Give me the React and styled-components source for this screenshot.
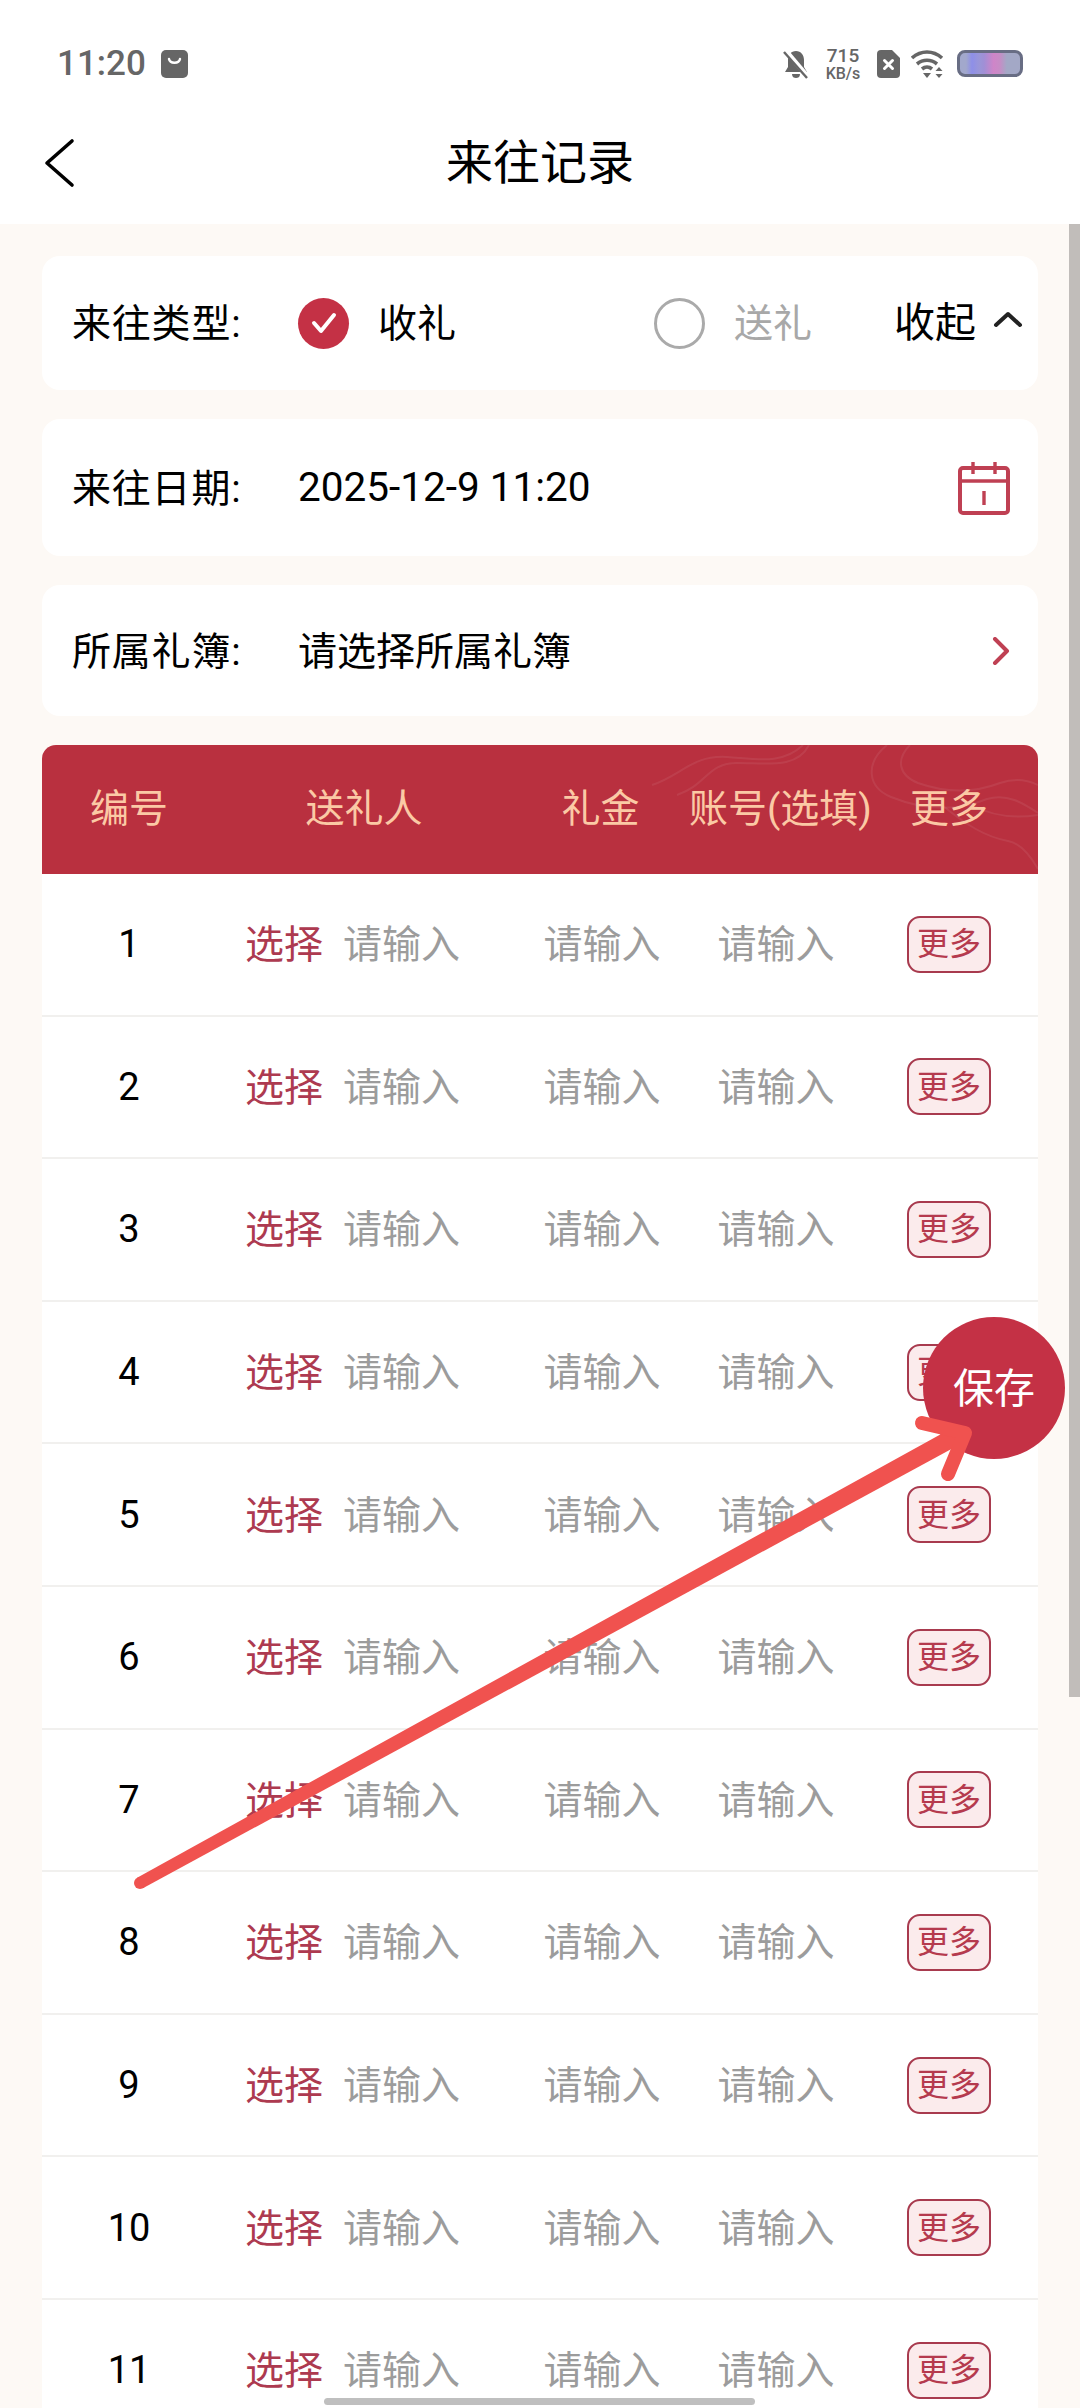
import React from 'react'
import styled, { createGlobalStyle } from 'styled-components'

const GlobalStyle = createGlobalStyle`
  html, body {
    margin: 0;
    padding: 0;
    background: #fdf9f5;
  }
  * {
    box-sizing: border-box;
  }
`

const Page = styled.div`
  position: relative;
  width: 1080px;
  height: 2408px;
  overflow: hidden;
  background: #fdf9f5;
  color: #000;
  font-family: Roboto, 'Noto Sans CJK SC', sans-serif;
  font-size: 39px;
`

const Top = styled.header`
  height: 224px;
  background: #fff;
  display: flex;
  flex-direction: column;
`

const StatusBar = styled.div`
  height: 127px;
  padding: 0 57px 0 57px;
  display: flex;
  align-items: center;
  color: #666;
`

const Clock = styled.span`
  font-size: 35px;
  font-weight: 500;
  margin-right: 15px;
`

const StatusRight = styled.div`
  margin-left: auto;
  display: flex;
  align-items: center;
`

const Speed = styled.div`
  width: 40px;
  margin: 0 14px 0 13px;
  display: flex;
  flex-direction: column;
  align-items: center;
  font-weight: 500;
  font-size: 19px;
  line-height: 20px;
  span + span {
    font-size: 16px;
    line-height: 16px;
  }
`

const Battery = styled.div`
  width: 66px;
  height: 27px;
  margin-left: 12px;
  border: 3px solid #686d84;
  border-radius: 8px;
  background: linear-gradient(
    90deg,
    #a2a8cc 0 10%,
    #8e8fe8 20%,
    #9a96d8 32%,
    #a08fd6 40%,
    #cf85c8 56%,
    #c78cc6 66%,
    #a3a8c6 78%,
    #a3a8c6 100%
  );
`

const NavBar = styled.nav`
  position: relative;
  height: 97px;
  display: flex;
  align-items: flex-start;
  justify-content: center;
  font-size: 47px;
  line-height: 72px;
`

const BackIcon = styled.svg`
  position: absolute;
  left: 44px;
  top: 11px;
`

const Content = styled.main`
  padding: 32px 42px 0 42px;
  display: flex;
  flex-direction: column;
`

const Card = styled.section`
  height: ${(p) => p.$h}px;
  margin-bottom: 29px;
  padding: 0 28px 0 30px;
  display: flex;
  align-items: center;
  background: #fff;
  border-radius: 18px;
`

const Label = styled.span`
  width: 226px;
  flex-shrink: 0;
  padding-bottom: 6px;
  letter-spacing: 0.8px;
`

const Radio = styled.div`
  width: 51px;
  height: 51px;
  flex-shrink: 0;
  border-radius: 50%;
  display: flex;
  align-items: center;
  justify-content: center;
  background: ${(p) => (p.$on ? '#c43145' : '#fff')};
  border: ${(p) => (p.$on ? 'none' : '3px solid #aaa')};
`

const RadioText = styled.span`
  flex-shrink: 0;
  padding-bottom: 6px;
  margin-left: 29px;
  width: ${(p) => (p.$on ? '276px' : '160px')};
  color: ${(p) => (p.$on ? '#000' : '#a8a8a8')};
`

const Collapse = styled.div`
  display: flex;
  align-items: center;
  flex-shrink: 0;
  margin-top: -8px;
  font-size: 41px;
  gap: 17px;
  white-space: nowrap;
`

const Value = styled.span`
  flex: 1;
  padding-bottom: ${(p) => (p.$cjk ? '6px' : '2px')};
  font-size: ${(p) => (p.$cjk ? '39px' : '40.5px')};
`

const TableHead = styled.div`
  position: relative;
  height: 129px;
  overflow: hidden;
  display: grid;
  grid-template-columns: 174px 296px 177px 178px 164px;
  align-items: center;
  background: #b9303f;
  border-radius: 14px 14px 0 0;
  color: #fbc9a5;
  text-align: center;
`

const HeadCell = styled.span`
  position: relative;
  margin-top: -10px;
  white-space: nowrap;
`

const Clouds = styled.svg`
  position: absolute;
  left: 0;
  top: 0;
`

const Row = styled.div`
  height: 142.6px;
  display: grid;
  grid-template-columns: 174px 296px 180px 168px 178px;
  align-items: center;
  background: #fff;
  border-bottom: 2px solid #f1f0ee;
  text-align: center;
  font-size: 38px;
`

const PersonCell = styled.div`
  display: flex;
  justify-content: flex-start;
  padding-left: 29px;
  gap: 20px;
`

const Pick = styled.span`
  color: #ad3a50;
  font-size: 39px;
  padding-bottom: 6px;
  white-space: nowrap;
`

const Placeholder = styled.span`
  color: #9c9c9c;
  font-size: 39px;
  padding-bottom: 6px;
  white-space: nowrap;
`

const MoreButton = styled.button`
  justify-self: center;
  width: 84px;
  height: 57px;
  padding: 0;
  border: 2px solid #a83a4e;
  border-radius: 13px;
  background: #fbebec;
  color: #b53a4e;
  font-family: inherit;
  font-size: 32px;
  line-height: 50px;
  white-space: nowrap;
`

const SaveButton = styled.div`
  position: absolute;
  left: 923px;
  top: 1317px;
  width: 142px;
  height: 142px;
  padding-bottom: 6px;
  border-radius: 50%;
  display: flex;
  align-items: center;
  justify-content: center;
  background: #c43145;
  color: #fff;
  font-size: 41px;
`

const ArrowOverlay = styled.svg`
  position: absolute;
  left: 0;
  top: 0;
`

const ScrollThumb = styled.div`
  position: absolute;
  right: 0;
  top: 224px;
  width: 11px;
  height: 1473px;
  background: #c1bdba;
`

const HomeBar = styled.div`
  position: absolute;
  left: 324px;
  top: 2398px;
  width: 431px;
  height: 7px;
  border-radius: 4px;
  background: #bfbfbf;
`

const rows = [1, 2, 3, 4, 5, 6, 7, 8, 9, 10, 11]

const App = () => {
  return (
    <Page>
      <GlobalStyle />
      <Top>
        <StatusBar>
          <Clock>11:20</Clock>
          <svg width="27" height="28" viewBox="0 0 27 28">
            <rect width="27" height="28" rx="5" fill="#666" />
            <path d="M8 9c1 5 10 5 11 0" fill="none" stroke="#fff" strokeWidth="2.4" strokeLinecap="round" />
          </svg>
          <StatusRight>
            <svg width="28" height="30" viewBox="0 0 28 30">
              <path d="M14 2c5 0 8 4 8 9v7l3 5H3l3-5v-7c0-5 3-9 8-9z" fill="#666" />
              <path d="M10 25h8c0 3-2 4-4 4s-4-1-4-4z" fill="#666" />
              <path d="M3 1l23 27" stroke="#fff" strokeWidth="5" />
              <path d="M2 3l23 26" stroke="#666" strokeWidth="2.4" />
            </svg>
            <Speed>
              <span>715</span>
              <span>KB/s</span>
            </Speed>
            <svg width="23" height="28" viewBox="0 0 23 28">
              <path d="M4 0h11l8 8v16a4 4 0 0 1-4 4H4a4 4 0 0 1-4-4V4a4 4 0 0 1 4-4z" fill="#666" />
              <path d="M7.500 10.500l8 8M15.500 10.500l-8 8" stroke="#fff" strokeWidth="3" strokeLinecap="round" />
            </svg>
            <svg width="34" height="28" viewBox="0 0 34 28" style={{ marginLeft: 11 }}>
              <path d="M1 8c9-8 21-8 30 0" fill="none" stroke="#666" strokeWidth="3.600" />
              <path d="M6 14c6-5 14-5 20 0" fill="none" stroke="#666" strokeWidth="3.600" />
              <path d="M11 19c3-2.500 7-2.500 10 0" fill="none" stroke="#666" strokeWidth="3.600" />
              <path d="M12 23h8l-4 5z" fill="#666" />
              <path d="M28 17l3.500 4h-7zM28 28l-3.500-4h7z" fill="#666" />
            </svg>
            <Battery />
          </StatusRight>
        </StatusBar>
        <NavBar>
          <BackIcon width="32" height="50" viewBox="0 0 32 50">
            <path d="M28 3L3 25l25 22" fill="none" stroke="#000" strokeWidth="3.600" strokeLinecap="round" strokeLinejoin="round" />
          </BackIcon>
          来往记录
        </NavBar>
      </Top>

      <Content>
        <Card $h={134}>
          <Label>来往类型:</Label>
          <Radio $on>
            <svg width="28" height="24" viewBox="0 0 28 24">
              <path d="M4 12l7 8L24 4" fill="none" stroke="#fff" strokeWidth="4" strokeLinecap="round" strokeLinejoin="round" />
            </svg>
          </Radio>
          <RadioText $on>收礼</RadioText>
          <Radio />
          <RadioText>送礼</RadioText>
          <Collapse>
            收起
            <svg width="30" height="18" viewBox="0 0 30 18">
              <path d="M3 15L15 4l12 11" fill="none" stroke="#222" strokeWidth="4" strokeLinecap="round" strokeLinejoin="round" />
            </svg>
          </Collapse>
        </Card>

        <Card $h={137}>
          <Label>来往日期:</Label>
          <Value>2025-12-9 11:20</Value>
          <svg width="52" height="54" viewBox="0 0 52 54">
            <rect x="2" y="7" width="48" height="45" rx="3" fill="none" stroke="#bf4053" strokeWidth="4" />
            <path d="M2 20h48M15 1v12M37 1v12M26 30v14" fill="none" stroke="#bf4053" strokeWidth="3.400" />
          </svg>
        </Card>

        <Card $h={131}>
          <Label>所属礼簿:</Label>
          <Value $cjk>请选择所属礼簿</Value>
          <svg width="20" height="28" viewBox="0 0 20 28" style={{ marginRight: -1 }}>
            <path d="M4 2l12 12L4 26" fill="none" stroke="#bf4053" strokeWidth="4" strokeLinecap="round" strokeLinejoin="round" />
          </svg>
        </Card>

        <TableHead>
          <Clouds width="996" height="129" viewBox="0 0 996 129">
            <g fill="none" stroke="#fff" strokeOpacity="0.07" strokeWidth="2">
              <path d="M610 40c30-10 40-30 75-28 30 2 55 8 76-12" />
              <path d="M635 50c30-10 30-32 60-32 30 0 60 6 72-18" />
              <path d="M845 0c-22 18-20 42 4 52 30 12 62 16 96 2 20-6 36 4 51 14" />
              <path d="M868 0c-14 14-12 30 8 38 28 10 56 10 82 0 14-5 26-4 38 2" />
              <path d="M900 60c24 20 44 32 66 36 12 2 22 14 30 28" />
              <path d="M930 60c18 10 40 14 66 10" />
            </g>
          </Clouds>
          <HeadCell>编号</HeadCell>
          <HeadCell>送礼人</HeadCell>
          <HeadCell>礼金</HeadCell>
          <HeadCell>账号(选填)</HeadCell>
          <HeadCell>更多</HeadCell>
        </TableHead>

        {rows.map((n) => (
          <Row key={n}>
            <span>{n}</span>
            <PersonCell>
              <Pick>选择</Pick>
              <Placeholder>请输入</Placeholder>
            </PersonCell>
            <Placeholder>请输入</Placeholder>
            <Placeholder>请输入</Placeholder>
            <MoreButton>更多</MoreButton>
          </Row>
        ))}
      </Content>

      <SaveButton>保存</SaveButton>

      <ArrowOverlay width="1080" height="2408" viewBox="0 0 1080 2408">
        <g fill="#f0524f">
          <circle cx="140" cy="1883" r="6" />
          <path d="M137.100 1877.700L955.700 1426L964.300 1442L142.900 1888.300Z" />
        </g>
        <path
          d="M922 1423L965 1433L948 1474"
          fill="none"
          stroke="#f0524f"
          strokeWidth="14"
          strokeLinecap="round"
          strokeLinejoin="round"
        />
      </ArrowOverlay>

      <ScrollThumb />
      <HomeBar />
    </Page>
  )
}

export default App
